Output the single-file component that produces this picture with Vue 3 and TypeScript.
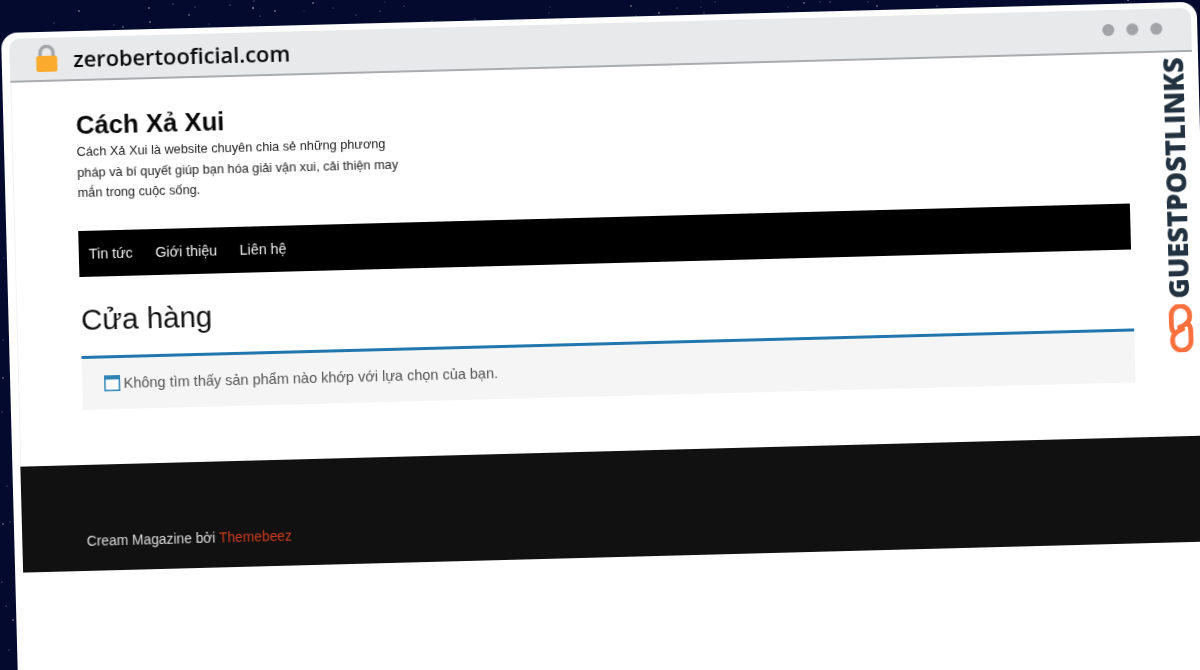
<script setup lang="ts">
interface Star { x: number; y: number; r: number; o: number }
const points: [number, number, number][] = [
  [79, 11, 0.8], [149, 8, 0.8], [173, 4, 0.6], [195, 7, 0.5], [189, 15, 0.7], [230, 5, 0.6], [253, 8, 1], [254, 1, 0.6],
  [260, 16, 0.5], [275, 11, 0.8], [313, 3, 0.8], [333, 8, 0.4], [356, 15, 0.5], [380, 11, 0.6], [404, 6, 0.5], [385, 2, 0.4],
  [54, 23, 0.5], [114, 25, 0.5], [123, 27, 0.7], [150, 22, 0.8], [209, 24, 0.4], [304, 11, 0.3], [432, 21, 0.6], [475, 19, 0.5],
  [550, 7, 0.4], [549, 13, 0.4],
  [631, 6, 0.8], [659, 13, 0.8], [677, 8, 0.5], [636, 16, 0.5], [701, 7, 0.4], [704, 13, 0.5], [715, 2, 0.5], [804, 3, 0.7],
  [788, 7, 0.4], [830, 2, 0.6], [820, 2, 0.5], [877, 6, 0.7], [868, 2, 0.5], [937, 6, 0.6], [1128, 0.5, 0.6],
  [3, 378, 0.7], [3, 524, 0.7], [7, 486, 0.5], [10, 522, 0.5], [2, 582, 0.6], [6, 606, 0.6], [13, 620, 0.7], [2, 412, 0.5],
  [4, 258, 0.4], [3, 340, 0.5], [9, 650, 0.5]
]
const stars: Star[] = points.map(([x, y, o]) => ({ x, y, r: 0.4 + o * 0.35, o }))
</script>

<template>
  <div class="stage">
    <svg class="stars" width="1200" height="670" viewBox="0 0 1200 670" aria-hidden="true">
      <circle v-for="(s, i) in stars" :key="i" :cx="s.x" :cy="s.y" :r="s.r" fill="#fff" :opacity="s.o" />
    </svg>
    <div class="window">
      <div class="titlebar">
        <svg class="lock" width="24" height="28" viewBox="0 0 24 28" aria-hidden="true">
          <path d="M5.5 13V8a6.5 6.5 0 0 1 13 0V13" fill="none" stroke="#a3a5a8" stroke-width="3.4" />
          <rect x="1.5" y="11" width="21" height="16" rx="2.5" fill="#fbab2c" />
        </svg>
        <span class="url">zerobertooficial.com</span>
        <div class="dots"><i></i><i></i><i></i></div>
      </div>
      <div class="page">
        <div class="branding">
          <h1>Cách Xả Xui</h1>
          <p>Cách Xả Xui là website chuyên chia sẻ những phương pháp và bí quyết giúp bạn hóa giải vận xui, cải thiện may mắn trong cuộc sống.</p>
        </div>
        <nav class="nav">
          <a>Tin tức</a>
          <a>Giới thiệu</a>
          <a>Liên hệ</a>
        </nav>
        <h2>Cửa hàng</h2>
        <div class="notice">
          <svg width="16" height="16" viewBox="0 0 16 16" aria-hidden="true">
            <rect x="0.75" y="0.75" width="14.5" height="14.5" fill="#fff" stroke="#2f86b5" stroke-width="1.5" />
            <rect x="0.75" y="0.75" width="14.5" height="3.6" fill="#2f86b5" />
          </svg>
          <span>Không tìm thấy sản phẩm nào khớp với lựa chọn của bạn.</span>
        </div>
        <footer class="footer">
          <span>Cream Magazine bởi <a>Themebeez</a></span>
        </footer>
      </div>
      <div class="brand">
        <span>GUESTPOSTLINKS</span>
        <svg width="24" height="48" viewBox="0 0 24 48" aria-hidden="true">
          <g fill="none" stroke="#f9703e" stroke-width="4.8" stroke-linecap="round">
            <path d="M6 29 C3.5 27.5 2.4 25 2.4 21 V11 a9.2 9.2 0 0 1 18.4 0 V13 C20.8 18 16.5 21 10.5 23" />
            <path d="M6 29 C3.5 27.5 2.4 25 2.4 21 V11 a9.2 9.2 0 0 1 18.4 0 V13 C20.8 18 16.5 21 10.5 23" transform="rotate(180 12 24)" />
          </g>
        </svg>
      </div>
    </div>
  </div>
</template>

<style>
html, body { margin: 0; padding: 0; background: #030a2e; }
</style>

<style scoped>
.stage {
  position: relative;
  width: 1200px;
  height: 670px;
  overflow: hidden;
  background: #030a2e;
  font-family: "Liberation Sans", Arial, sans-serif;
}
.stars { position: absolute; inset: 0; }
.window {
  position: absolute;
  left: 0.5px;
  top: 33px;
  width: 1195.5px;
  height: 720px;
  box-sizing: border-box;
  padding: 6px 6px 0 7.5px;
  background: #fff;
  border-radius: 16px 16px 0 0;
  transform-origin: 0 0;
  transform: rotate(-1.5deg);
  filter: blur(0.25px);
}
.titlebar {
  display: flex;
  align-items: center;
  height: 44px;
  box-sizing: border-box;
  padding: 0 29px 0 25px;
  background: #e8e9eb;
  border-bottom: 2px solid #a9abae;
  border-radius: 10px 10px 0 0;
}
.lock { flex: none; }
.url {
  margin-left: 15px;
  font-family: "Open Sans", sans-serif;
  font-weight: 600;
  font-size: 21.8px;
  color: #0a0a0a;
}
.dots { margin-left: auto; display: flex; gap: 12px; margin-top: -2px; }
.dots i { width: 12px; height: 12px; border-radius: 50%; background: #a3a4a8; display: block; }
.page { padding-top: 28px; border-left: 1px solid #f3f3f7; }
.branding { margin-left: 64px; width: 330px; }
h1 { margin: 0; font-size: 25.7px; line-height: 33px; font-weight: 700; color: #0a0a0a; }
.branding p { margin: 0; font-size: 12.75px; line-height: 20.5px; color: #222; }
.nav {
  display: flex;
  align-items: center;
  gap: 22.5px;
  width: 1052px;
  height: 46px;
  margin: 27px 0 0 63.5px;
  padding-left: 10px;
  box-sizing: border-box;
  background: #000;
  color: #eee;
  font-size: 14.3px;
}
h2 { margin: 25px 0 0 64px; font-size: 29.5px; line-height: 36px; font-weight: 400; color: #111; }
.notice {
  display: flex;
  align-items: center;
  gap: 4px;
  width: 1053px;
  height: 54px;
  margin: 18px 0 0 63px;
  padding-left: 22px;
  box-sizing: border-box;
  background: #f5f5f5;
  border-top: 3px solid #2176ae;
  color: #555;
  font-size: 14.5px;
}
.footer {
  height: 106px;
  margin-top: 55px;
  margin-left: -1px;
  width: 1300px;
  padding: 69px 0 0 65px;
  box-sizing: border-box;
  background: #111;
  color: #ddd;
  font-size: 13.8px;
}
.footer a { color: #cf3a1e; }
.brand {
  position: absolute;
  left: 1157px;
  top: 55px;
  display: flex;
  flex-direction: column;
  align-items: center;
  gap: 6px;
}
.brand span {
  writing-mode: vertical-rl;
  transform: rotate(180deg);
  font-family: "Open Sans", sans-serif;
  font-weight: 800;
  font-size: 27.3px;
  line-height: 28px;
  color: #233240;
}
.brand svg { margin-left: 2px; }
</style>
